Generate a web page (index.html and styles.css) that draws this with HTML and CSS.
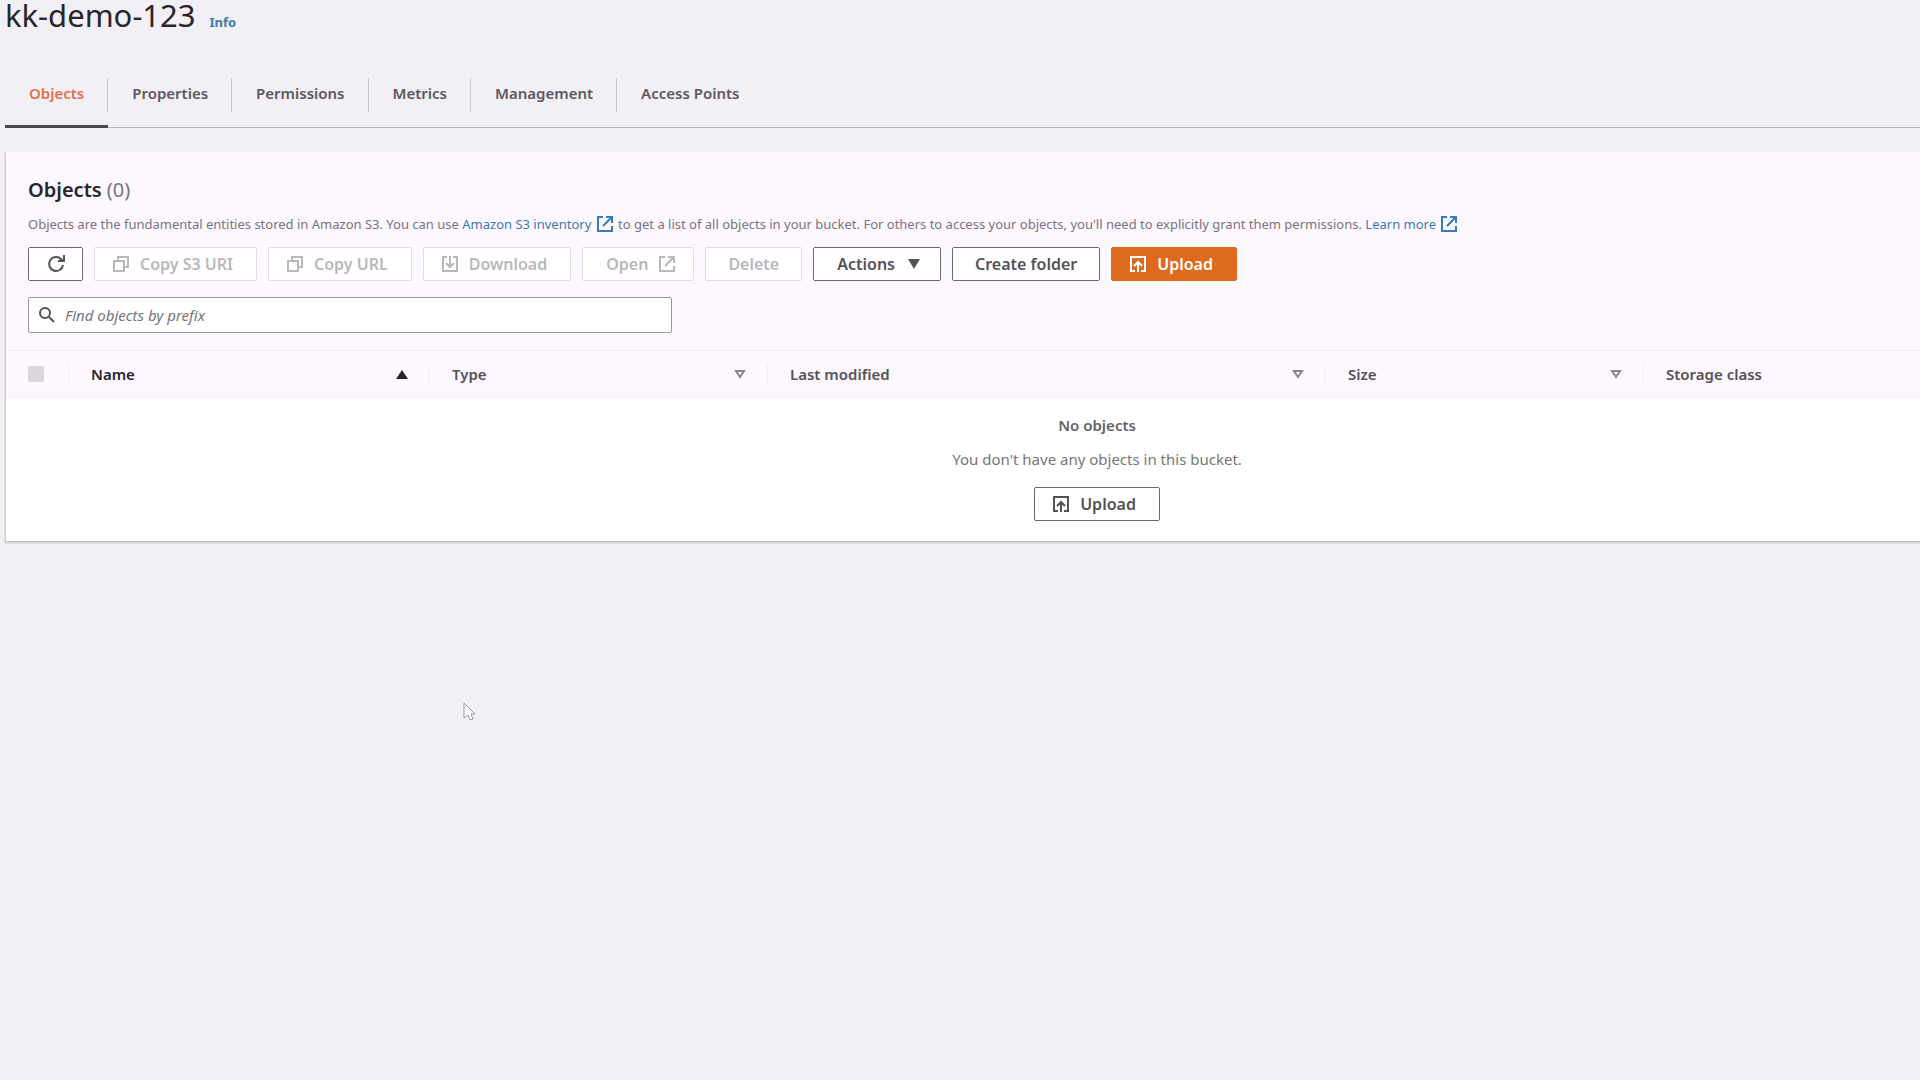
FILE: index.html
```html
<!DOCTYPE html>
<html lang="en">
<head>
<meta charset="utf-8">
<meta name="viewport" content="width=device-width, initial-scale=1">
<title>kk-demo-123</title>
<link rel="stylesheet" href="styles.css">
</head>
<body>
<svg class="sprite" aria-hidden="true">
  <symbol id="i-external" viewBox="0 0 16 16"><path d="M6 1H1v14h14v-5M9 1h6v6M15 1 6 10"/></symbol>
  <symbol id="i-copy" viewBox="0 0 16 16"><path d="M1 5h10v10H1zM5 5V1h10v10h-4"/></symbol>
  <symbol id="i-download" viewBox="0 0 16 16"><path d="M5 1H1v14h14V1h-4M8 0v11M4 7l4 4 4-4"/></symbol>
  <symbol id="i-upload" viewBox="0 0 16 16"><path d="M5 15H1V1h14v14h-4M8 16V6M4 10l4-4 4 4"/></symbol>
  <symbol id="i-refresh" viewBox="0 0 18 18"><path d="M16 10a7 7 0 1 1-2-6l2 2M17 0v6h-6"/></symbol>
  <symbol id="i-search" viewBox="0 0 16 16"><circle cx="6" cy="6" r="5"/><path d="m10 10 5 5"/></symbol>
</svg>
<main class="page">
  <header class="title">
    <h1>kk-demo-123</h1>
    <a class="info" href="#info">Info</a>
  </header>

  <nav class="tabs" aria-label="Bucket sections">
    <a class="tab active" href="#objects" aria-current="page">Objects</a>
    <a class="tab" href="#properties">Properties</a>
    <a class="tab" href="#permissions">Permissions</a>
    <a class="tab" href="#metrics">Metrics</a>
    <a class="tab" href="#management">Management</a>
    <a class="tab" href="#access-points">Access Points</a>
  </nav>

  <section class="card" id="objects">
    <div class="card-head">
      <h2>Objects <span class="count">(0)</span></h2>
      <p class="desc">Objects are the fundamental entities stored in Amazon S3. You can use <a href="#inventory">Amazon S3 inventory <svg class="icon small"><use href="#i-external"/></svg></a> to get a list of all objects in your bucket. For others to access your objects, you'll need to explicitly grant them permissions. <a href="#learn">Learn more <svg class="icon small"><use href="#i-external"/></svg></a></p>
      <div class="actions">
        <button class="btn square" type="button" aria-label="Refresh"><svg class="icon refresh"><use href="#i-refresh"/></svg></button>
        <button class="btn" type="button" disabled><svg class="icon"><use href="#i-copy"/></svg>Copy S3 URI</button>
        <button class="btn" type="button" disabled><svg class="icon"><use href="#i-copy"/></svg>Copy URL</button>
        <button class="btn" type="button" disabled><svg class="icon"><use href="#i-download"/></svg>Download</button>
        <button class="btn trailing" type="button" disabled>Open<svg class="icon"><use href="#i-external"/></svg></button>
        <button class="btn plain" type="button" disabled>Delete</button>
        <button class="btn trailing" type="button">Actions<svg class="caret" viewBox="0 0 12 10"><path d="M0 0h12L6 10z"/></svg></button>
        <button class="btn plain" type="button">Create folder</button>
        <button class="btn primary" type="button"><svg class="icon"><use href="#i-upload"/></svg>Upload</button>
      </div>
      <label class="search">
        <svg class="icon"><use href="#i-search"/></svg>
        <input type="text" placeholder="Find objects by prefix" aria-label="Find objects by prefix">
      </label>
    </div>

    <table class="grid">
      <colgroup><col class="c-check"><col class="c-name"><col class="c-type"><col class="c-modified"><col class="c-size"><col></colgroup>
      <thead>
        <tr>
          <th class="check"><input type="checkbox" aria-label="Select all objects" disabled></th>
          <th class="sorted"><div class="cell">Name<svg class="sort" viewBox="0 0 12 10"><path d="M0 10h12L6 1z"/></svg></div></th>
          <th><div class="cell">Type<svg class="sort open" viewBox="0 0 12 10"><path d="M2 2h8L6 8z"/></svg></div></th>
          <th><div class="cell">Last modified<svg class="sort open" viewBox="0 0 12 10"><path d="M2 2h8L6 8z"/></svg></div></th>
          <th><div class="cell">Size<svg class="sort open" viewBox="0 0 12 10"><path d="M2 2h8L6 8z"/></svg></div></th>
          <th><div class="cell">Storage class</div></th>
        </tr>
      </thead>
      <tbody>
        <tr>
          <td colspan="6">
            <div class="empty">
              <strong>No objects</strong>
              <p>You don't have any objects in this bucket.</p>
              <button class="btn" type="button"><svg class="icon"><use href="#i-upload"/></svg>Upload</button>
            </div>
          </td>
        </tr>
      </tbody>
    </table>
  </section>
  <svg class="pointer" viewBox="0 0 14 20" aria-hidden="true"><path d="M1 1v15l4-3 2 5 3-1-2-5h4z"/></svg>
</main>
</body>
</html>
```
FILE: styles.css
```css
* { box-sizing: border-box; }

body {
  margin: 0;
  min-height: 100vh;
  overflow-x: hidden;
  background: #f2f0f5;
  color: #545257;
  font-family: "Noto Sans", "Open Sans", sans-serif;
  font-size: 15px;
  line-height: 20px;
}

h1, h2, p { margin: 0; }
a { color: #3f78b0; text-decoration: none; }

.sprite { position: absolute; width: 0; height: 0; }

.icon {
  flex: none;
  width: 16px;
  height: 16px;
  fill: none;
  stroke: currentColor;
  stroke-width: 2;
}
.icon.small { margin: 0 2px; vertical-align: -3px; stroke: #3a7cb8; }
.icon.refresh { width: 18px; height: 18px; }

.page {
  position: relative;
  padding-left: 5px;
}

.title {
  display: flex;
  align-items: baseline;
  gap: 14px;
}
.title h1 {
  color: #28262b;
  font-size: 31px;
  font-weight: 400;
  line-height: 30px;
}
.info { font-size: 13px; font-weight: 700; }

/* Tabs */
.tabs {
  display: flex;
  height: 64px;
  margin-top: 32px;
  border-bottom: 1px solid #b5b3b9;
}
.tab {
  display: flex;
  align-items: center;
  height: 64px;
  padding: 0 24px 4px;
  border-bottom: 3px solid transparent;
  background: linear-gradient(#c9c7cd, #c9c7cd) right 14px / 1px 34px no-repeat;
  color: #5b595f;
  font-size: 15px;
  font-weight: 600;
}
.tab:last-child { background: none; }
.tab.active { border-bottom-color: #4a484d; color: #e0704a; }

/* Card; the table runs on past the right edge of the window */
.card {
  margin: 24px -14% 0 0;
  border-left: 1px solid #cfcdd2;
  border-bottom: 1px solid #c2c0c4;
  background: #fff;
  box-shadow: 0 1px 2px #c5c3c8;
}
.card-head {
  padding: 26px 22px 17px;
  background: #fdf7ff;
}
.card h2 {
  color: #28262b;
  font-size: 20px;
  font-weight: 600;
  line-height: 24px;
}
.count { color: #77757b; font-weight: 400; }
.desc {
  margin-top: 12px;
  color: #77757b;
  font-size: 13px;
  white-space: nowrap;
}

.actions {
  display: flex;
  gap: 11px;
  margin-top: 13px;
}
.btn {
  display: flex;
  align-items: center;
  justify-content: center;
  gap: 11px;
  height: 34px;
  padding: 0 23px 0 18px;
  border: 1px solid #6b696e;
  border-radius: 2px;
  background: #fff;
  color: #545257;
  font: 600 16px/20px "Noto Sans", "Open Sans", sans-serif;
}
.btn.square { width: 55px; padding: 0; }
.btn.trailing { padding: 0 18px 0 23px; }
.btn.plain { padding: 0 22px; }
.btn:disabled { border-color: #e0dce2; color: #bab7bc; }
.btn.primary { border-color: #df6a1d; background: #df6a1d; color: #fff; }
.caret { width: 12px; height: 10px; margin: 0 2px; fill: currentColor; }

.search {
  display: flex;
  align-items: center;
  gap: 10px;
  width: 644px;
  height: 36px;
  margin-top: 16px;
  padding: 0 10px;
  border: 1px solid #9a989d;
  border-radius: 2px;
  background: #fff;
}
.search input {
  flex: 1;
  min-width: 0;
  padding: 0;
  border: 0;
  outline: 0;
  background: none;
  font: 400 15px/20px "Noto Sans", "Open Sans", sans-serif;
}
.search input::placeholder { color: #77757b; font-style: italic; opacity: 1; }

/* Table */
.grid {
  width: 100%;
  border-collapse: collapse;
  table-layout: fixed;
}
.c-check { width: 62px; }
.c-name { width: 361px; }
.c-type { width: 338px; }
.c-modified { width: 558px; }
.c-size { width: 318px; }
.grid th {
  height: 47px;
  padding: 0;
  border-top: 1px solid #f2edf4;
  border-bottom: 1px solid #f6f0f8;
  background: #fdf7ff;
  color: #545257;
  font-size: 15px;
  font-weight: 600;
  text-align: left;
}
.grid .check { padding-left: 22px; }
.grid .sorted { color: #28262b; }
.check input {
  display: block;
  width: 16px;
  height: 16px;
  margin: 0;
  appearance: none;
  border-radius: 2px;
  background: #dad7dc;
}
.cell {
  display: flex;
  align-items: center;
  justify-content: space-between;
  height: 20px;
  padding: 0 21px 0 22px;
  border-left: 1px solid #f1ecf3;
}
.sort { width: 12px; height: 10px; fill: currentColor; }
.sort.open { fill: none; stroke: #88868c; stroke-width: 2; }

.grid td { padding: 0; }
.empty {
  display: flex;
  flex-direction: column;
  align-items: center;
  padding: 17px 0 20px;
  color: #77757b;
}
.empty strong { color: #66646a; font-weight: 600; }
.empty p { margin: 14px 0 18px; }

.pointer {
  position: absolute;
  top: 702px;
  left: 463px;
  width: 14px;
  height: 20px;
  fill: #fff;
  stroke: #99979d;
}
```
